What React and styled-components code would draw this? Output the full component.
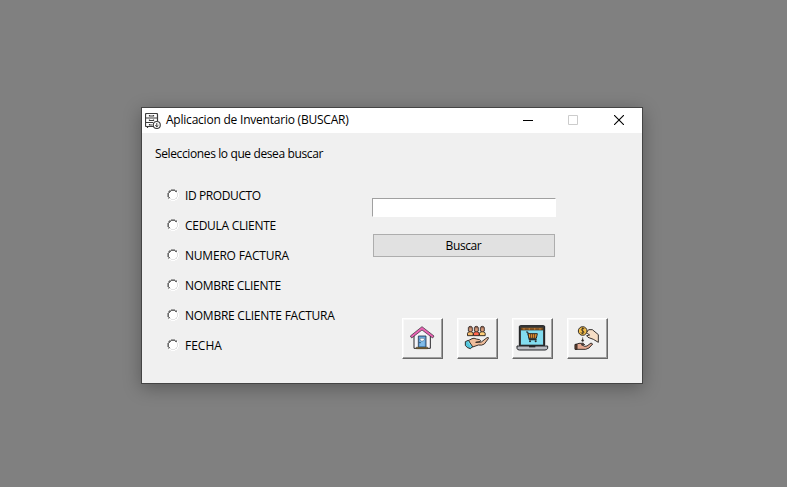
import React from "react";
import styled, { createGlobalStyle } from "styled-components";

const GlobalStyle = createGlobalStyle`
  * { box-sizing: border-box; }
  body { margin: 0; background: #808080; overflow: hidden; }
`;

const Desktop = styled.main`
  width: 787px;
  height: 487px;
  padding: 107px 0 0 141px;
  background: #808080;
  font: 12px/16px "Open Sans", "Noto Sans", sans-serif;
  color: #000;
`;

const Window = styled.section`
  width: 502px;
  height: 277px;
  border: 1px solid #444;
  background: #f0f0f0;
  box-shadow: 0 4px 17px rgba(0, 0, 0, 0.3);
`;

const TitleBar = styled.header`
  display: flex;
  align-items: center;
  height: 25px;
  padding-left: 3px;
  background: #fff;
`;

const Text = styled.span`
  display: inline-block;
  white-space: nowrap;
  letter-spacing: ${(p) => p.$spacing || 0}px;
`;

const Title = styled.h1`
  flex: 1;
  margin: 0 0 1px 5px;
  font-size: 12px;
  font-weight: 400;
`;

const WindowControl = styled.button`
  display: grid;
  place-items: center;
  width: ${(p) => p.$width || 46}px;
  height: 25px;
  padding: 0 0 1px;
  border: 0;
  background: transparent;
`;

const Body = styled.div`
  display: grid;
  grid-template-columns: 230px 1fr;
  grid-template-rows: 47px 1fr;
  height: 250px;
`;

const Prompt = styled.p`
  grid-column: 1 / -1;
  margin: 0;
  padding: 13px 0 0 13px;
`;

const Options = styled.div`
  display: flex;
  flex-direction: column;
  padding-left: 25px;
`;

const Option = styled.label`
  display: flex;
  align-items: center;
  gap: 6px;
  height: 30px;

  ${Text} { padding-top: 2px; }
`;

const RadioMark = styled.svg`
  display: block;
  width: 12px;
  height: 12px;
`;

const Actions = styled.div`
  display: flex;
  flex-direction: column;
  align-items: flex-start;
  padding-top: 18px;
`;

const SearchInput = styled.input`
  width: 184px;
  height: 19px;
  padding: 0 2px;
  border: 1px solid #fff;
  border-top-color: #a0a0a0;
  border-left-color: #a0a0a0;
  outline: 0;
  background: #fff;
`;

const SearchButton = styled.button`
  width: 182px;
  height: 23px;
  margin: 17px 0 61px 1px;
  padding: 0 1px 0 0;
  border: 1px solid #adadad;
  background: #e1e1e1;
  color: #000;
  font: inherit;
`;

const Toolbar = styled.nav`
  display: flex;
  gap: 14px;
  padding-left: 30px;
`;

const ToolButton = styled.button`
  width: 41px;
  height: 41px;
  padding: 0;
  border: 1px solid;
  border-color: #fff #696969 #696969 #fff;
  background: #f0f0f0;
  box-shadow: inset -1px -1px #a0a0a0, inset 1px 1px #f8f8f8;

  svg { display: block; width: 39px; height: 39px; }
`;

const CabinetIcon = () => (
  <svg width="16" height="16" viewBox="0 0 16 16" fill="none" stroke="#3c3c3c" strokeWidth="1.2">
    <path d="M8.5 13.5H1.5Q.5 13.5 .5 12.5V1.5Q.5 .5 1.5 .5H11.5Q12.5 .5 12.5 1.5V8M.5 5H12.5M.5 9.5H8M2.5 13.5V15" />
    <path d="M4.5 2V3H8.5V2M4.5 6.5V7.5H8.5V6.5M4.5 11V12H7.5" />
    <circle cx="11.8" cy="12" r="3.5" fill="#fff" strokeWidth="1.1" />
    <path d="M11.8 10V14M10.2 12.3L11.8 13.8L13.4 12.3" strokeWidth="1" />
  </svg>
);

const RadioIcon = () => (
  <RadioMark viewBox="0 0 12 12" shapeRendering="crispEdges">
    <path d="M4 1H8V2H10V4H11V8H10V10H8V11H4V10H2V8H1V4H2V2H4Z" fill="#fff" />
    <path d="M4 0H8V1H4ZM2 1H4V2H2ZM8 1H10V2H8ZM1 2H2V4H1ZM0 4H1V8H0ZM1 8H2V10H1Z" fill="#a0a0a0" />
    <path d="M4 1H8V2H4ZM2 2H4V3H2ZM8 2H10V3H8ZM2 3H3V4H2ZM1 4H2V8H1ZM2 8H3V9H2Z" fill="#696969" />
    <path d="M9 3H10V4H9ZM10 4H11V8H10ZM9 8H10V9H9ZM2 9H4V10H2ZM8 9H10V10H8ZM4 10H8V11H4Z" fill="#e3e3e3" />
    <path d="M10 2H11V4H10ZM11 4H12V8H11ZM10 8H11V10H10ZM2 10H4V11H2ZM8 10H10V11H8ZM4 11H8V12H4Z" fill="#fff" />
  </RadioMark>
);

const HouseIcon = () => (
  <svg viewBox="15 21 117 117" strokeLinejoin="round">
    <path d="M48 68L72 49L97 68V109H48Z" fill="#f5f4f8" stroke="#29282d" strokeWidth="3" />
    <path d="M37 72L72 44L108 72L104 78L72 54L41 78Z" fill="#ea62b4" stroke="#29232b" strokeWidth="2" />
    <path d="M61 72H84V106H61Z" fill="#5b9bd8" stroke="#273c50" strokeWidth="2.5" />
    <path d="M65 76H80V102H65Z" fill="#80bce9" />
    <path d="M66 79H79V84L75 87H70L66 84Z" fill="#fff" stroke="#34506d" strokeWidth="1.5" />
    <path d="M64 92H68" stroke="#20384f" strokeWidth="3" />
    <path d="M55 106H89V110H55Z" fill="#bd994d" stroke="#3a321e" strokeWidth="2" />
  </svg>
);

const people = [
  [55, "#f5b96c"],
  [73, "#ff654e"],
  [91, "#ffcf78"],
];

const CustomersIcon = () => (
  <svg viewBox="18 21 117 117" stroke="#29221f" strokeWidth="2.8" strokeLinejoin="round">
    {people.map(([x, color]) => (
      <g key={x} transform={`translate(${x} 0)`}>
        <path d="M-8.5 71V64Q-8 59 0 59Q8 59 8.5 64V71Z" fill={color} />
        <path d="M-6 57V47Q-5 43 0 43Q5 43 6 47V57Q0 61 -6 57Z" fill="#926451" strokeWidth="2.3" />
        <path d="M-3.5 49H4V56Q0 60 -3.5 56Z" fill="#d79b78" stroke="none" />
      </g>
    ))}
    <path d="M49 86L60 80Q66 77 73 81L83 83Q88 85 84 89L71 91L88 90L105 77Q111 75 109 80L97 96Q90 101 79 99L62 105L54 99Z" fill="#efbd9b" />
    <path d="M40 89L49 85L62 104L55 110Q44 108 40 100Z" fill="#50c5dc" />
    <path d="M48 88L57 104" stroke="#86e0eb" />
  </svg>
);

const SalesIcon = () => (
  <svg viewBox="18 21 117 117" strokeLinejoin="round">
    <rect x="37" y="41" width="76" height="61" rx="3" fill="#39393b" stroke="#151719" strokeWidth="3" />
    <path d="M42 47H108V98H42Z" fill="#82dcf0" />
    <path d="M42 47H108V54H42Z" fill="#965e28" stroke="#382714" strokeWidth="2" />
    <path d="M51 48V53M67 48V53M83 48V53M99 48V53" stroke="#b97837" strokeWidth="4" />
    <path d="M57 60H62L67 83H89" fill="none" stroke="#282a2b" strokeWidth="3.5" />
    <path d="M63 65H91L88 79H66Z" fill="#f59c32" stroke="#2b2520" strokeWidth="3" />
    <path d="M71 66V79M77 66V79M83 66V79" stroke="#40291b" strokeWidth="2.5" />
    <circle cx="69" cy="88" r="3" fill="#2a2b2d" />
    <circle cx="86" cy="88" r="3" fill="#2a2b2d" />
    <path d="M30 102H122V109Q120 114 114 114H37Q31 114 30 109Z" fill="#b9bbc2" stroke="#25262a" strokeWidth="3" />
    <path d="M66 102H85V106H66Z" fill="#252629" />
  </svg>
);

const PaymentIcon = () => (
  <svg viewBox="18 21 117 117" stroke="#282421" strokeWidth="2.8" strokeLinejoin="round">
    <path d="M73 62L80 53H91L109 68V91L94 82L78 76L74 71L83 69L77 65Z" fill="#f6dec5" />
    <circle cx="62" cy="57" r="13" fill="#f4bf4b" />
    <path d="M67 50Q58 47 58 53Q58 56 63 57Q68 59 65 63Q61 66 56 62M62 46V67" fill="none" stroke="#3b3021" strokeWidth="2.5" />
    <path d="M62 76V91" fill="none" strokeWidth="2" />
    <path d="M58 87L62 81L66 87Z" fill="#282421" strokeWidth="1" />
    <path d="M40 98L51 94H64L68 98H58L68 103L75 102L87 93L92 96L81 108L71 112H40Z" fill="#e3a890" />
    <path d="M39 97H45V112H39Z" fill="#71442d" />
  </svg>
);

const options = [
  ["ID PRODUCTO", -0.4],
  ["CEDULA CLIENTE", -0.28],
  ["NUMERO FACTURA", -0.21],
  ["NOMBRE CLIENTE", -0.32],
  ["NOMBRE CLIENTE FACTURA", -0.25],
  ["FECHA", 0],
];

const tools = [
  ["Inicio", HouseIcon],
  ["Clientes", CustomersIcon],
  ["Ventas", SalesIcon],
  ["Pagos", PaymentIcon],
];

export default function App() {
  return (
    <>
      <GlobalStyle />
      <Desktop>
        <Window>
          <TitleBar>
            <CabinetIcon />
            <Title><Text $spacing={-0.22}>Aplicacion de Inventario (BUSCAR)</Text></Title>
            <WindowControl aria-label="Minimizar" $width={44}>
              <svg width="10" height="10"><path d="M0 5.5H10" stroke="#000" /></svg>
            </WindowControl>
            <WindowControl aria-label="Maximizar" disabled>
              <svg width="10" height="10"><path d="M.5.5H9.5V9.5H.5Z" fill="none" stroke="#ccc" /></svg>
            </WindowControl>
            <WindowControl aria-label="Cerrar">
              <svg width="10" height="10"><path d="M0 0L10 10M10 0L0 10" stroke="#000" strokeWidth="1.1" /></svg>
            </WindowControl>
          </TitleBar>
          <Body>
            <Prompt><Text $spacing={-0.38}>Selecciones lo que desea buscar</Text></Prompt>
            <Options>
              {options.map(([label, spacing]) => (
                <Option key={label}>
                  <RadioIcon />
                  <Text $spacing={spacing}>{label}</Text>
                </Option>
              ))}
            </Options>
            <Actions>
              <SearchInput aria-label="Buscar" />
              <SearchButton><Text $spacing={-0.4}>Buscar</Text></SearchButton>
              <Toolbar>
                {tools.map(([label, Icon]) => (
                  <ToolButton key={label} aria-label={label}><Icon /></ToolButton>
                ))}
              </Toolbar>
            </Actions>
          </Body>
        </Window>
      </Desktop>
    </>
  );
}
